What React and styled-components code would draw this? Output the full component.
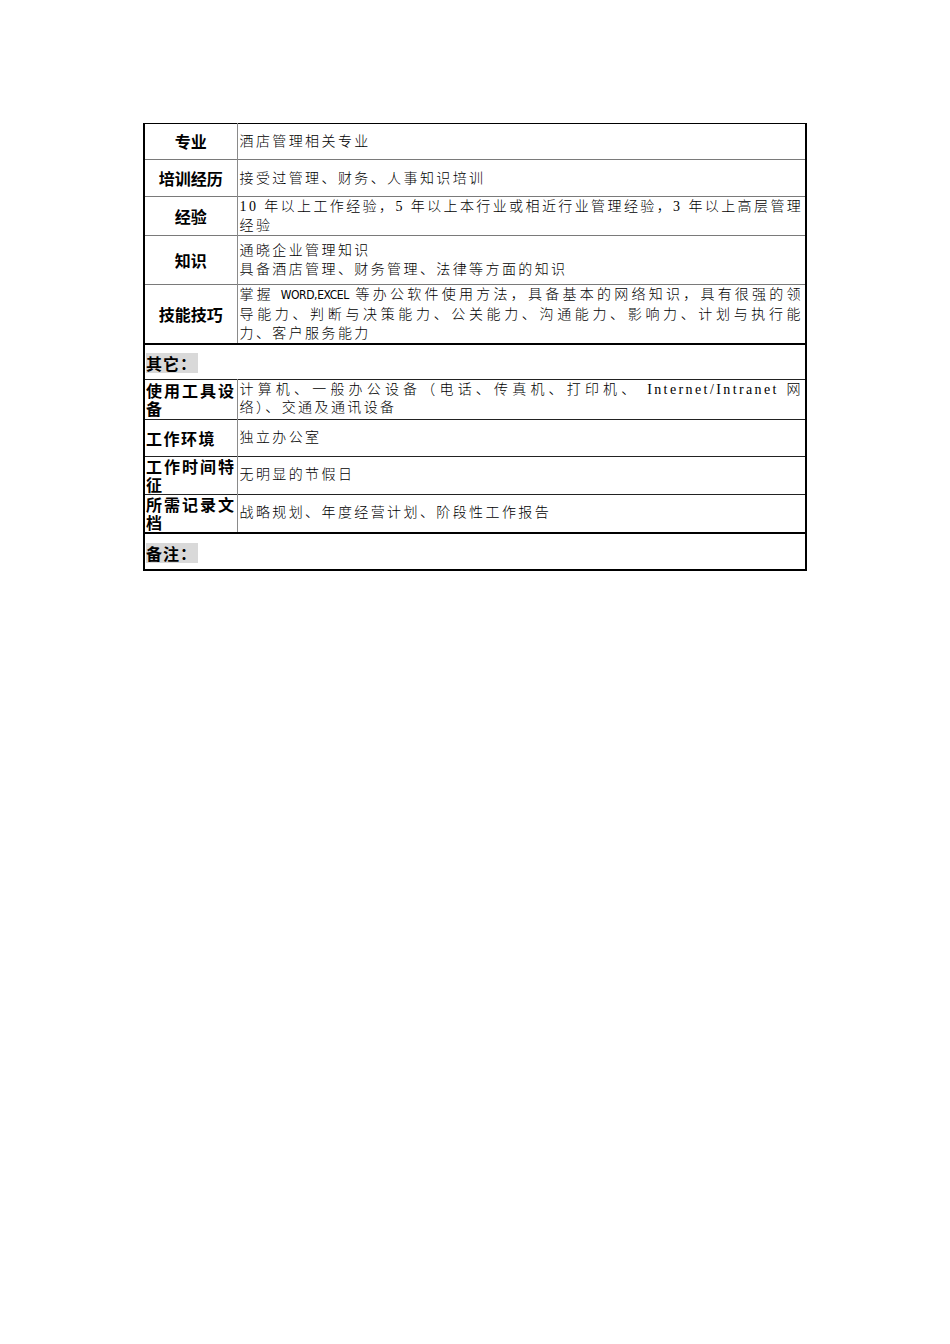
import React from 'react';
import styled, { createGlobalStyle, css } from 'styled-components';

const GlobalStyle = createGlobalStyle`
  html, body {
    margin: 0;
    padding: 0;
    background: #fff;
  }
  body {
    min-height: 1344px;
    font-family: "Liberation Serif", "Noto Sans CJK SC", serif;
    color: #000;
  }
`;

const Sheet = styled.table`
  margin: 123px 0 0 143px;
  width: 664px;
  table-layout: fixed;
  border-collapse: collapse;
  border-top: 1px solid #000;
  border-left: 2px solid #000;
  border-right: 2px solid #000;
  border-bottom: 2px solid #000;
`;

const Row = styled.tr`
  height: ${p => p.$h}px;
  border-bottom: 1px solid ${p => (p.$lower ? '#222' : '#7a7a7a')};
`;

const SectionRow = styled.tr`
  height: ${p => p.$h}px;
  border-top: 2px solid #000;
  border-bottom: 1px solid #222;
`;

const labelText = css`
  font-family: "Noto Sans CJK SC", "Liberation Sans", sans-serif;
  font-weight: 700;
  font-size: 16px;
`;

const Label = styled.td`
  ${labelText};
  padding: 0 1px;
  border-right: 1px solid #8a8a8a;
  vertical-align: middle;
  text-align: ${p => (p.$lower ? 'justify' : 'center')};
  line-height: ${p => (p.$lower ? 18 : 19)}px;
  letter-spacing: ${p => (p.$lower ? 1.5 : 0)}px;
`;

const Content = styled.td`
  padding: 0 2px;
  vertical-align: middle;
  font-size: 14px;
  font-weight: 300;
  letter-spacing: 2.4px;
  line-height: ${p => (p.$lower ? 18 : 19)}px;
`;

// each visual line is its own block so the breaks match the sheet;
// full lines are stretched edge to edge like the original
const Line = styled.div`
  text-align: justify;
  text-align-last: ${p => (p.$fill ? 'justify' : 'left')};
  white-space: nowrap;
`;

const Narrow = styled.span`
  font-family: "Liberation Sans Narrow", "DejaVu Sans Condensed", "Liberation Serif", sans-serif;
  font-stretch: condensed;
  font-size: 12px;
  letter-spacing: -0.4px;
`;

const SectionCell = styled.td`
  padding: 0 1px 5px;
  vertical-align: bottom;
`;

const SectionTitle = styled.span`
  ${labelText};
  display: inline-block;
  line-height: 20px;
  letter-spacing: 1px;
  padding-right: 1px;
  background: #d9d9d9;
`;

const upper = [
  { label: '专业', h: 36, lines: [{ t: '酒店管理相关专业' }] },
  { label: '培训经历', h: 37, lines: [{ t: '接受过管理、财务、人事知识培训' }] },
  {
    label: '经验',
    h: 38,
    lines: [
      { t: '10 年以上工作经验，5 年以上本行业或相近行业管理经验，3 年以上高层管理', fill: true },
      { t: '经验' }
    ]
  },
  {
    label: '知识',
    h: 49,
    lines: [{ t: '通晓企业管理知识' }, { t: '具备酒店管理、财务管理、法律等方面的知识' }]
  },
  {
    label: '技能技巧',
    h: 59,
    lines: [
      {
        t: (
          <>
            掌握 <Narrow>WORD,EXCEL</Narrow> 等办公软件使用方法，具备基本的网络知识，具有很强的领
          </>
        ),
        fill: true
      },
      { t: '导能力、判断与决策能力、公关能力、沟通能力、影响力、计划与执行能', fill: true },
      { t: '力、客户服务能力' }
    ]
  }
];

const lower = [
  {
    label: '使用工具设备',
    h: 40,
    lines: [
      { t: '计算机、一般办公设备（电话、传真机、打印机、 Internet/Intranet 网', fill: true },
      { t: '络）、交通及通讯设备' }
    ]
  },
  { label: '工作环境', h: 37, lines: [{ t: '独立办公室' }] },
  { label: '工作时间特征', h: 38, lines: [{ t: '无明显的节假日' }] },
  { label: '所需记录文档', h: 39, lines: [{ t: '战略规划、年度经营计划、阶段性工作报告' }] }
];

const renderRow = (row, isLower) => (
  <Row key={row.label} $h={row.h} $lower={isLower}>
    <Label $lower={isLower}>{row.label}</Label>
    <Content $lower={isLower}>
      {row.lines.map((line, i) => (
        <Line key={i} $fill={line.fill}>
          {line.t}
        </Line>
      ))}
    </Content>
  </Row>
);

export default function App() {
  return (
    <>
      <GlobalStyle />
      <Sheet>
        <colgroup>
          <col style={{ width: 93 }} />
          <col />
        </colgroup>
        <tbody>
          {upper.map(row => renderRow(row, false))}

          <SectionRow $h={35}>
            <SectionCell colSpan={2}>
              <SectionTitle>其它：</SectionTitle>
            </SectionCell>
          </SectionRow>

          {lower.map(row => renderRow(row, true))}

          <SectionRow $h={37}>
            <SectionCell colSpan={2}>
              <SectionTitle>备注：</SectionTitle>
            </SectionCell>
          </SectionRow>
        </tbody>
      </Sheet>
    </>
  );
}
